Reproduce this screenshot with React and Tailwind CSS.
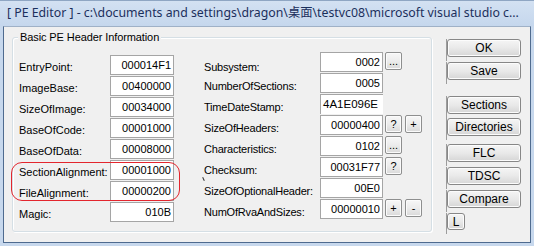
import React from "react";

const leftRows = [
  ["EntryPoint:", "000014F1"],
  ["ImageBase:", "00400000"],
  ["SizeOfImage:", "00034000"],
  ["BaseOfCode:", "00001000"],
  ["BaseOfData:", "00008000"],
  ["SectionAlignment:", "00001000"],
  ["FileAlignment:", "00000200"],
  ["Magic:", "010B"],
];

const rightRows = [
  { label: "Subsystem:", value: "0002", btns: ["..."], lead: "leading-[30px]" },
  { label: "NumberOfSections:", value: "0005", btns: [] },
  { label: "TimeDateStamp:", value: "4A1E096E", btns: [], open: true },
  { label: "SizeOfHeaders:", value: "00000400", btns: ["?", "+"] },
  { label: "Characteristics:", value: "0102", btns: ["..."] },
  { label: "Checksum:", value: "00031F77", btns: ["?"] },
  { label: "SizeOfOptionalHeader:", value: "00E0", btns: [] },
  { label: "NumOfRvaAndSizes:", value: "00000010", btns: ["+", "-"] },
];

const sideButtons = [
  { text: "OK", mt: "mt-[12px]" },
  { text: "Save", mt: "mt-[1px]" },
  { text: "Sections", mt: "mt-[12px]" },
  { text: "Directories", mt: "mt-[0px]" },
  { text: "FLC", mt: "mt-[4px]" },
  { text: "TDSC", mt: "mt-[1px]" },
  { text: "Compare", mt: "mt-[1px]" },
];

function SmallBtn({ children }) {
  return (
    <div className="w-[17px] h-[18px] rounded-[2px] border border-[#8e8f8f] bg-gradient-to-b from-[#f7f7f7] via-[#ececec] to-[#d9d9d9] flex items-center justify-center text-[11px] leading-none text-black shadow-[inset_0_0_0_1px_#fbfbfb]">
      {children}
    </div>
  );
}

function SideBtn({ text, mt, small }) {
  return (
    <div className={`${mt} border-l border-[#9c9c9c] pb-[4px] flex`}>
      <div
        className={`${small ? "w-[18px] h-[17px]" : "w-[74px] h-[18px]"} rounded-[3px] border border-[#878787] bg-gradient-to-b from-[#f5f5f5] via-[#e9e9e9] to-[#d6d6d6] shadow-[inset_0_0_0_1px_#fcfcfc] flex items-center justify-center text-[12px] leading-none text-black`}
      >
        {text}
      </div>
    </div>
  );
}

export default function App() {
  return (
    <div
      className="relative w-[534px] h-[246px] overflow-hidden bg-[#c7d8ed] flex flex-col"
      style={{ fontFamily: '"Liberation Sans", Arial, sans-serif' }}
    >
      {/* title bar */}
      <div className="h-[26px] flex items-center pl-[7px] bg-gradient-to-b from-[#d3e1f2] to-[#c5d7ed] border-t border-[#8fa6c3]">
        <span
          className="text-[12.3px] text-[#1b2f5c] whitespace-nowrap"
          style={{ fontFamily: '"Noto Sans", "Noto Sans CJK SC", sans-serif' }}
        >
          [ PE Editor ] - c:\documents and settings\dragon\桌面\testvc08\microsoft visual studio c...
        </span>
      </div>

      {/* client area */}
      <div className="ml-[3px] w-[528px] h-[217px] bg-[#f0f0f0] border border-t-[#9fb1c7] border-[#4f6b8f] flex">
        {/* group box */}
        <div className="relative ml-[8px] mt-[10px] w-[420px] h-[195px] rounded-[3px] border border-[#d5dfe5] shadow-[inset_1px_1px_0_#ffffff,1px_1px_0_#ffffff]">
          <div className="absolute left-[5px] top-[-8px] px-[2px] bg-[#f0f0f0] text-[11px] leading-[14px] text-black tracking-[-0.1px]">
            Basic PE Header Information
          </div>

          <div className="flex pl-[6px] text-[11px] text-black">
            {/* left column */}
            <div className="pt-[17px] flex flex-col w-[155px]">
              {leftRows.map(([label, value]) => (
                <div key={label} className="h-[21px] flex items-start">
                  <div className="w-[91px] h-[20px] leading-[24px] whitespace-nowrap">{label}</div>
                  <div className="w-[64px] h-[20px] bg-white border border-[#a5a5a5] text-right pr-[2px] leading-[18px]">
                    {value}
                  </div>
                </div>
              ))}
            </div>

            {/* right column */}
            <div className="ml-[30px] pt-[14px] flex flex-col">
              {rightRows.map((r) => (
                <div key={r.label} className="h-[21px] flex items-start">
                  <div className={`w-[116px] h-[20px] ${r.lead || "leading-[26px]"} whitespace-nowrap tracking-[-0.2px]`}>
                    {r.label}
                  </div>
                  {r.open ? (
                    <div className="w-[63px] h-[20px] bg-white border-l border-t border-[#a5a5a5] pl-[2px] text-[11.5px] leading-[19px]">
                      {r.value}
                    </div>
                  ) : (
                    <div className="w-[63px] h-[20px] bg-white border border-[#a5a5a5] text-right pr-[2px] leading-[18px]">
                      {r.value}
                    </div>
                  )}
                  <div className="ml-[2px] flex gap-[3px]">
                    {r.btns.map((b, i) => (
                      <SmallBtn key={i}>{b}</SmallBtn>
                    ))}
                  </div>
                </div>
              ))}
            </div>
          </div>

          {/* stray tick near Checksum */}
          <div className="absolute left-[190px] top-[139px] w-px h-[4px] bg-[#333] rotate-[-25deg]" />

          {/* red annotation */}
          <div className="absolute left-[-2px] top-[124px] w-[169px] h-[39px] rounded-[11px] border border-[#e3262e]" />
        </div>

        {/* side buttons */}
        <div className="ml-[14px] flex flex-col">
          {sideButtons.map((b) => (
            <SideBtn key={b.text} {...b} />
          ))}
          <SideBtn text="L" mt="mt-[1px]" small />
        </div>
      </div>
    </div>
  );
}
